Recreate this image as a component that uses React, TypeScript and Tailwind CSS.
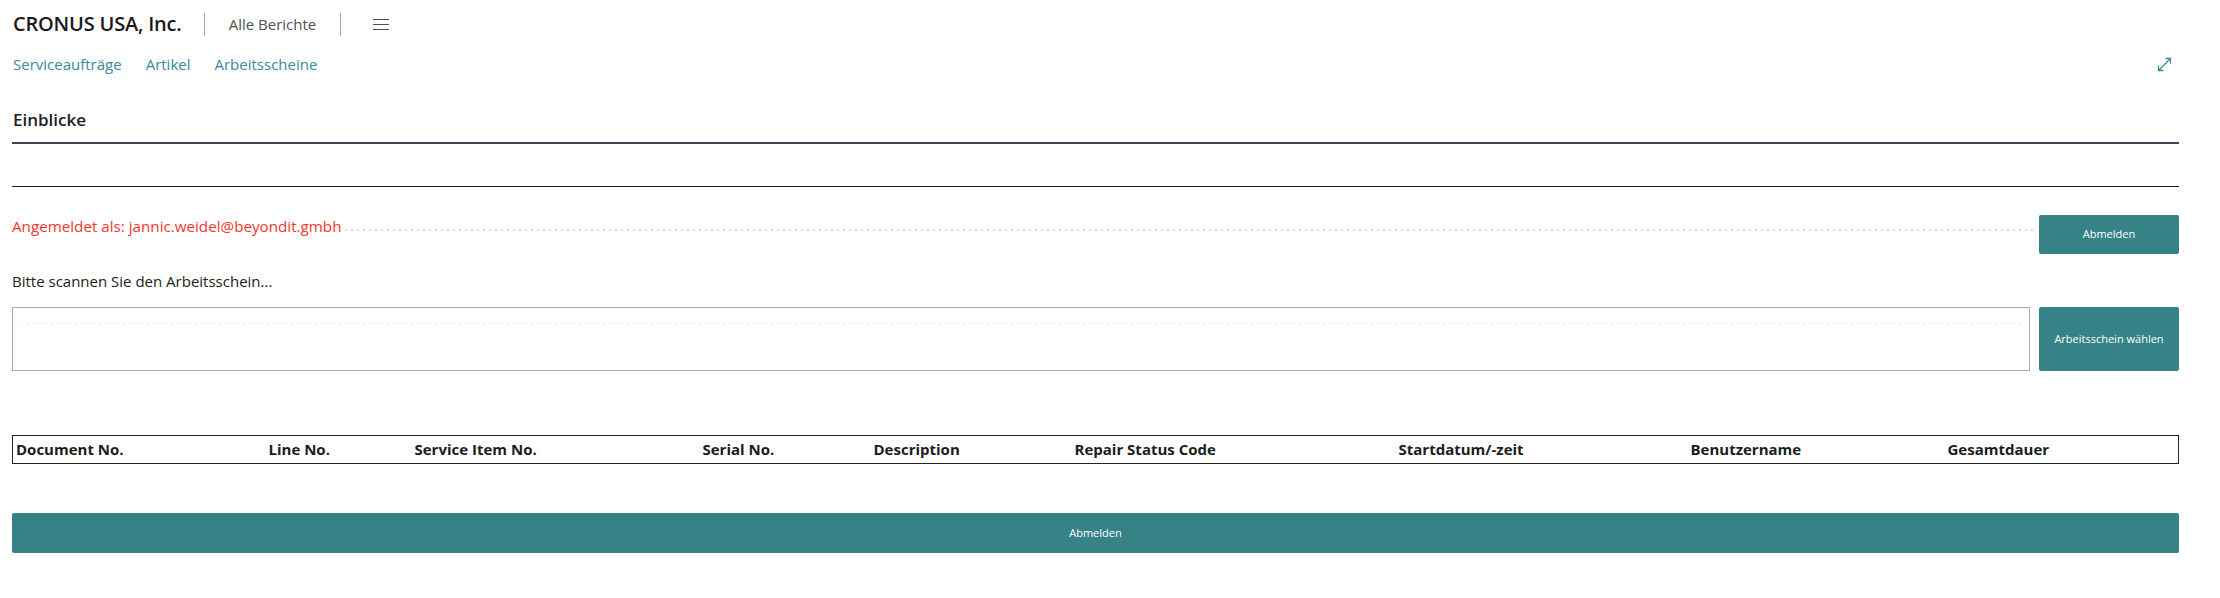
import React from 'react';

const columns = [
  { label: 'Document No.', width: 'w-[253px]' },
  { label: 'Line No.', width: 'w-[146px]' },
  { label: 'Service Item No.', width: 'w-[288px]' },
  { label: 'Serial No.', width: 'w-[171px]' },
  { label: 'Description', width: 'w-[201px]' },
  { label: 'Repair Status Code', width: 'w-[324px]' },
  { label: 'Startdatum/-zeit', width: 'w-[292px]' },
  { label: 'Benutzername', width: 'w-[257px]' },
  { label: 'Gesamtdauer', width: 'w-[234px]' },
];

const HamburgerIcon = () => (
  <svg width="16" height="11" viewBox="0 0 16 11" className="text-[#505050]">
    <path d="M0 0.5h16M0 5.5h16M0 10.5h16" stroke="currentColor" strokeWidth="1" />
  </svg>
);

const ExpandIcon = () => (
  <svg width="15" height="15" viewBox="0 0 15 15" fill="none" className="text-[#3a8a98]">
    <path d="M1.5 13.5 13.5 1.5M8.5 1.5h5v5M1.5 8.5v5h5" stroke="currentColor" strokeWidth="1.3" />
  </svg>
);

// dotted leader like the BC field caption fill
const Leader = ({ className = '' }: { className?: string }) => (
  <div
    className={`h-[2px] bg-[linear-gradient(to_right,#d9d9d9_2px,transparent_2px)] bg-[length:6px_2px] bg-repeat-x ${className}`}
  />
);

const App: React.FC = () => {
  return (
    <div className="min-h-screen bg-white font-['Segoe_UI','Open_Sans',sans-serif] pl-[12px] pr-[41px] text-[#212121]">
      {/* top bar */}
      <header className="h-[48px] flex items-center">
        <span className="pl-[1px] text-[20px] font-semibold text-[#1a1a1a] tracking-[-0.2px]">CRONUS USA, Inc.</span>
        <span className="ml-[22px] w-px h-[23px] bg-[#a8a8a8]" />
        <span className="ml-[24px] text-[15px] text-[#505050]">Alle Berichte</span>
        <span className="ml-[24px] w-px h-[23px] bg-[#a8a8a8]" />
        <button className="ml-[32px] flex items-center">
          <HamburgerIcon />
        </button>
      </header>

      <nav className="h-[32px] flex items-center text-[15px] text-[#3a8a98]">
        <a className="pl-[1px]">Serviceaufträge</a>
        <a className="ml-[24px]">Artikel</a>
        <a className="ml-[24px]">Arbeitsscheine</a>
        <span className="ml-auto mr-[7px] flex items-center">
          <ExpandIcon />
        </span>
      </nav>

      {/* Einblicke */}
      <div className="h-[64px] pt-[18px] flex items-center border-b-2 border-[#3c4555]">
        <h2 className="pl-[1px] text-[17px] font-semibold text-[#212121]">Einblicke</h2>
      </div>
      <div className="h-[43px] border-b border-[#222222]" />

      {/* angemeldet row */}
      <div className="mt-[28px] flex items-start">
        <span className="text-[15.2px] leading-[20px] pt-[1px] text-[#f5362c] whitespace-nowrap">
          Angemeldet als: jannic.weidel@beyondit.gmbh
        </span>
        <Leader className="flex-1 mt-[14px] ml-[4px] mr-[2px]" />
        <button className="w-[140px] h-[39px] rounded-[2px] bg-[#358387] text-white text-[11px]">
          Abmelden
        </button>
      </div>

      <p className="mt-[17px] text-[15px] leading-[20px] text-[#212121]">Bitte scannen Sie den Arbeitsschein...</p>

      <div className="mt-[16px] flex items-stretch gap-[9px]">
        <div className="flex-1 h-[64px] border border-[#ababab] pt-[14px] px-[8px]">
          <div className="h-[2px] bg-[linear-gradient(to_right,#f0f0f0_2px,transparent_2px)] bg-[length:6px_2px] bg-repeat-x" />
        </div>
        <button className="w-[140px] h-[64px] rounded-[2px] bg-[#358387] text-white text-[11px]">
          Arbeitsschein wählen
        </button>
      </div>

      {/* table */}
      <table className="mt-[64px] w-full table-fixed border-collapse border border-[#222222]">
        <thead>
          <tr className="h-[28px]">
            {columns.map((c) => (
              <th
                key={c.label}
                className={`${c.width} pl-[3px] text-left text-[15px] font-bold text-[#1c1c1c] whitespace-nowrap`}
              >
                {c.label}
              </th>
            ))}
          </tr>
        </thead>
      </table>

      <button className="mt-[49px] w-full h-[40px] rounded-[2px] bg-[#358387] text-white text-[11px]">
        Abmelden
      </button>
    </div>
  );
};

export default App;
